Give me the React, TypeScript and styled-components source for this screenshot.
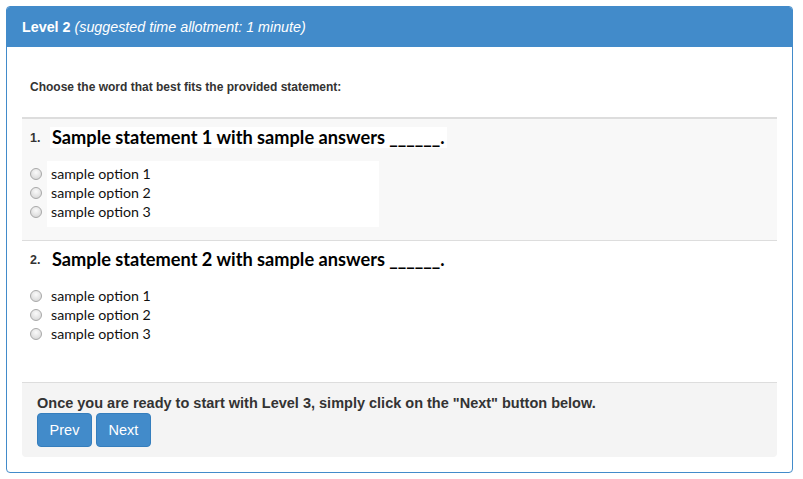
import React from 'react'
import styled, { createGlobalStyle } from 'styled-components'

const GlobalStyle = createGlobalStyle`
  html, body {
    margin: 0;
    padding: 0;
    background: #ffffff;
  }
  body {
    font-family: 'Liberation Sans', Arial, sans-serif;
    color: #333333;
  }
`

interface Question {
  statement: string
  options: string[]
  highlighted?: boolean
}

const questions: Question[] = [
  {
    statement: 'Sample statement 1 with sample answers ______.',
    options: ['sample option 1', 'sample option 2', 'sample option 3'],
    highlighted: true,
  },
  {
    statement: 'Sample statement 2 with sample answers ______.',
    options: ['sample option 1', 'sample option 2', 'sample option 3'],
  },
]

const Page = styled.div`
  padding: 6px 10px 6px 6px;
`

const Panel = styled.div`
  border: 1px solid #428bca;
  border-radius: 4px;
  background: #ffffff;
  overflow: hidden;
`

const PanelHeading = styled.div`
  background: #428bca;
  color: #ffffff;
  height: 41px;
  padding: 0 15px;
  display: flex;
  align-items: center;
  font-size: 14.3px;
  margin-top: -1px;
`

const Title = styled.span`
  font-weight: bold;
  margin-right: 4px;
`

const Subtitle = styled.em`
  font-style: italic;
`

const PanelBody = styled.div`
  padding: 15px;
`

const Instruction = styled.p`
  margin: 18px 8px 23px;
  font-size: 12px;
  font-weight: bold;
  color: #333333;
`

const QuestionBlock = styled.div<{ $highlighted?: boolean }>`
  background: ${(p) => (p.$highlighted ? '#f8f8f8' : '#ffffff')};
  border-top: ${(p) => (p.$highlighted ? '2px solid #dddddd' : 'none')};
  border-bottom: ${(p) => (p.$highlighted ? '1px solid #dddddd' : 'none')};
  padding: 9px 8px 13px;
`

const StatementRow = styled.div`
  display: flex;
  align-items: center;
  gap: 6px;
  margin-top: -1px;
`

const Number = styled.span`
  font-size: 12.5px;
  font-weight: bold;
  color: #333333;
  width: 14px;
`

const Statement = styled.span<{ $highlighted?: boolean }>`
  font-family: Lato, 'Open Sans', sans-serif;
  font-size: 18.2px;
  font-weight: bold;
  color: #000000;
  line-height: 21px;
  padding: 0 2px;
  background: ${(p) => (p.$highlighted ? '#ffffff' : 'transparent')};
`

const OptionList = styled.div`
  margin-top: 13px;
  display: flex;
  flex-direction: column;
`

const OptionBox = styled.div<{ $highlighted?: boolean }>`
  display: flex;
  flex-direction: column;
  width: 332px;
  padding: 3px 0 6px;
  margin-left: 17px;
  background: ${(p) => (p.$highlighted ? '#ffffff' : 'transparent')};
`

const OptionRow = styled.label`
  display: flex;
  align-items: center;
  height: 19px;
  margin-left: -17px;
  font-family: Lato, 'Open Sans', sans-serif;
  font-size: 14.2px;
  color: #111111;
`

const Radio = styled.span`
  width: 12px;
  height: 12px;
  border-radius: 50%;
  border: 1px solid #a8a8a8;
  background: radial-gradient(circle at 50% 35%, #fafafa 0%, #e4e4e4 55%, #cfcfcf 100%);
  margin-right: 9px;
  box-sizing: border-box;
  flex: none;
`

const Footer = styled.div`
  margin-top: 20px;
  background: #f4f4f4;
  border-top: 1px solid #dddddd;
  border-radius: 0 0 4px 4px;
  padding: 12px 15px 10px;
`

const FooterText = styled.p`
  margin: 0 0 2px;
  font-size: 14.5px;
  font-weight: bold;
  color: #333333;
`

const ButtonRow = styled.div`
  display: flex;
  gap: 4px;
`

const Button = styled.button`
  width: 55px;
  height: 34px;
  background: #428bca;
  border: 1px solid #357ebd;
  border-radius: 4px;
  color: #ffffff;
  font-family: 'Liberation Sans', Arial, sans-serif;
  font-size: 14.5px;
  cursor: pointer;
  padding: 0;
`

const App = () => {
  return (
    <Page>
      <GlobalStyle />
      <Panel>
        <PanelHeading>
          <Title>Level 2</Title>
          <Subtitle>(suggested time allotment: 1 minute)</Subtitle>
        </PanelHeading>
        <PanelBody>
          <Instruction>Choose the word that best fits the provided statement:</Instruction>
          {questions.map((q, i) => (
            <QuestionBlock key={i} $highlighted={q.highlighted}>
              <StatementRow>
                <Number>{i + 1}.</Number>
                <Statement $highlighted={q.highlighted}>{q.statement}</Statement>
              </StatementRow>
              <OptionList>
                <OptionBox $highlighted={q.highlighted}>
                  {q.options.map((o) => (
                    <OptionRow key={o}>
                      <Radio />
                      {o}
                    </OptionRow>
                  ))}
                </OptionBox>
              </OptionList>
            </QuestionBlock>
          ))}
          <Footer>
            <FooterText>
              Once you are ready to start with Level 3, simply click on the "Next" button below.
            </FooterText>
            <ButtonRow>
              <Button>Prev</Button>
              <Button>Next</Button>
            </ButtonRow>
          </Footer>
        </PanelBody>
      </Panel>
    </Page>
  )
}

export default App
